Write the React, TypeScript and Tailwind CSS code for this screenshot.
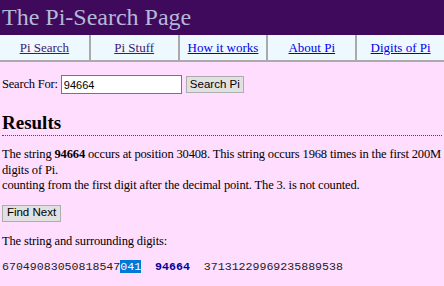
import React from "react";

export default function App() {
  const navs = [
    { t: "Pi Search", v: true },
    { t: "Pi Stuff", v: true },
    { t: "How it works", v: false },
    { t: "About Pi", v: false },
    { t: "Digits of Pi", v: false },
  ];
  return (
    <div className="w-[444px] h-[286px] overflow-hidden bg-[#ffddff] font-['Liberation_Serif',serif] text-[12.5px] text-black">
      <div className="h-[35px] bg-[#400a5c] pl-[2px] text-[24px] leading-[35px] text-[#b4b8d8]">
        The Pi-Search Page
      </div>
      <div className="grid grid-cols-5 h-[27px] bg-[#eef8ff] border-b-2 border-[#aaaaaa]">
        {navs.map((n, i) => (
          <div
            key={n.t}
            className={`flex items-center justify-center text-[13px] ${i > 0 ? "border-l-2 border-[#aaaaaa]" : ""}`}
          >
            <a href="#" className={`underline ${n.v ? "text-[#3c1a6e]" : "text-[#0000ee]"}`}>
              {n.t}
            </a>
          </div>
        ))}
      </div>
      <div className="px-[2px]">
        <div className="flex items-center mt-[13px] h-[19px]">
          <span className="tracking-[-0.2px]">Search For:</span>
          <input
            defaultValue="94664"
            className="ml-[3px] w-[121px] h-[19px] bg-white border border-[#767676] px-[2px] text-[11px] font-['Liberation_Sans',sans-serif] outline-none"
          />
          <button className="ml-[4px] h-[17px] w-[58px] bg-[#e1e1e1] border border-[#adadad] text-[11.5px] leading-none font-['Liberation_Sans',sans-serif]">
            Search Pi
          </button>
        </div>
        <h2 className="mt-[18px] text-[19px] font-bold leading-[22px]">Results</h2>
        <div className="mt-[1px] border-b border-dotted border-[#ff0000]"></div>
        <p className="mt-[11px] leading-[15.5px] tracking-[-0.15px]">
          The string <b>94664</b> occurs at position 30408. This string occurs 1968 times in the first 200M digits of Pi.
          <br />
          counting from the first digit after the decimal point. The 3. is not counted.
        </p>
        <button className="mt-[11px] h-[17px] w-[59px] bg-[#e1e1e1] border border-[#adadad] text-[11.5px] leading-none font-['Liberation_Sans',sans-serif]">
          Find Next
        </button>
        <p className="mt-[12px] leading-[15.5px] tracking-[-0.15px]">The string and surrounding digits:</p>
        <p className="mt-[9px] whitespace-pre font-['Liberation_Mono',monospace] text-[11.6px] leading-[15px] text-[#222]">
          67049083050818547<span className="bg-[#0078d7] text-white">041</span>{"  "}
          <b className="text-[#000099]">94664</b>{"  "}37131229969235889538
        </p>
      </div>
    </div>
  );
}
